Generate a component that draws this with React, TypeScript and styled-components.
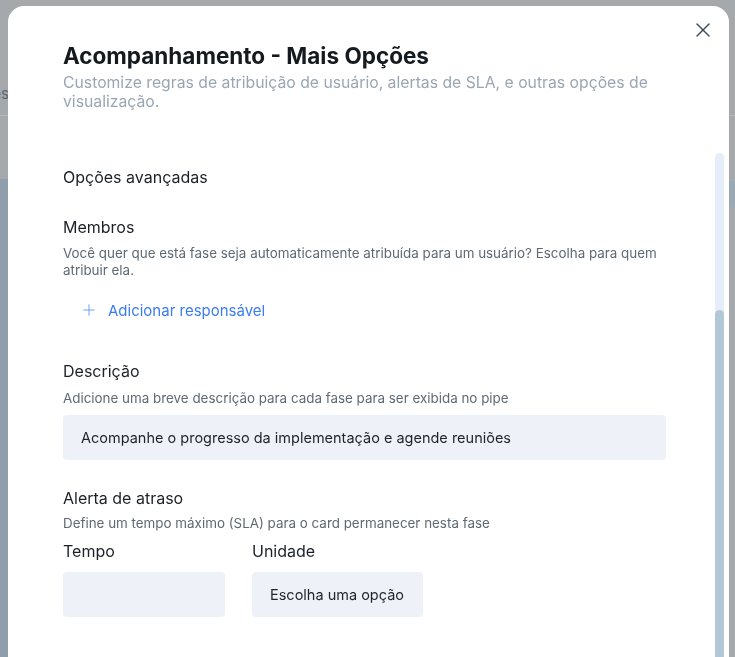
import React, { useLayoutEffect, useRef } from "react";
import styled, { createGlobalStyle } from "styled-components";
import { X, Plus } from "lucide-react";

const GlobalStyle = createGlobalStyle`
  html, body {
    margin: 0;
    height: 100%;
    overflow: hidden;
  }
  body {
    font-family: Inter, "Noto Sans", sans-serif;
    background-color: #a6a9ab;
  }
`;

const Page = styled.div`
  height: 100vh;
  display: flex;
  flex-direction: column;
`;

const TopBar = styled.header`
  height: 116px;
  border-bottom: 1px solid #b5b9bc;
  display: flex;
  align-items: flex-end;
  padding-bottom: 12px;
  box-sizing: border-box;
`;

const TabLabel = styled.div`
  width: 9px;
  display: flex;
  justify-content: flex-end;
  white-space: nowrap;
  font-size: 15px;
  color: #586674;
`;

const Board = styled.div`
  flex: 1;
  display: flex;
  justify-content: space-between;
  padding-top: 63px;
`;

const Column = styled.div`
  width: 12px;
  background-color: #8f9eaa;
`;

const SideCard = styled.div`
  width: 8px;
  height: 26px;
  margin-top: 2px;
  background-color: #9aa8b3;
`;

const Overlay = styled.div`
  position: fixed;
  inset: 0;
`;

const Modal = styled.section`
  position: absolute;
  top: 6px;
  left: 8px;
  right: 6px;
  bottom: -16px;
  background-color: #ffffff;
  border-radius: 16px;
  display: flex;
  flex-direction: column;
  overflow: hidden;
`;

const CloseButton = styled.button`
  position: absolute;
  top: 12px;
  right: 14px;
  width: 24px;
  height: 24px;
  padding: 0;
  border: none;
  background: transparent;
  color: #3d4a56;
  display: flex;
  align-items: center;
  justify-content: center;
  cursor: pointer;
`;

const Header = styled.div`
  padding: 36px 60px 0 55px;
  height: 147px;
  box-sizing: border-box;
  flex-shrink: 0;
`;

const Title = styled.h1`
  margin: 0;
  font-size: 22.5px;
  line-height: 28.6px;
  font-weight: 700;
  color: #151a1f;
`;

const Subtitle = styled.p`
  margin: 2px 0 0;
  font-size: 15.75px;
  line-height: 19.2px;
  color: #9aa6b3;
`;

const BodyWrap = styled.div`
  flex: 1;
  min-height: 0;
  display: flex;
  margin: 0 5px 16px 0;
`;

const Body = styled.div`
  flex: 1;
  min-width: 0;
  padding: 0 49px 0 55px;
  overflow-y: scroll;
  scrollbar-width: none;

  &::-webkit-scrollbar {
    display: none;
  }
`;

const ScrollTrack = styled.div`
  width: 9px;
  flex-shrink: 0;
  background-color: #e5eef8;
  border-radius: 5px 5px 0 0;
  display: flex;
  flex-direction: column;
`;

const ScrollThumb = styled.div`
  margin-top: 157px;
  flex: 1;
  background-color: #b3c8d7;
  border-radius: 5px 5px 0 0;
`;

const Section = styled.div<{ $gap?: number }>`
  margin-top: ${(p) => p.$gap ?? 0}px;
`;

const SectionTitle = styled.h3<{ $gap?: number }>`
  margin: ${(p) => p.$gap ?? 0}px 0 0;
  font-size: 16px;
  line-height: 24px;
  font-weight: 400;
  color: #1c2127;
`;

const Help = styled.p<{ $gap?: number }>`
  margin: ${(p) => p.$gap ?? 5}px 0 0;
  font-size: 13.4px;
  line-height: 17px;
  color: #5e6974;
`;

const AddButton = styled.button`
  margin-top: 13px;
  height: 36px;
  padding: 0 0 0 17px;
  border: none;
  background: transparent;
  display: flex;
  align-items: center;
  gap: 10px;
  font-family: inherit;
  font-size: 15px;
  color: #3b7cf4;
  cursor: pointer;

  svg {
    color: #6b9cf4;
  }
`;

const Field = styled.div<{ $width?: number; $gap?: number }>`
  margin-top: ${(p) => p.$gap ?? 9}px;
  width: ${(p) => (p.$width ? `${p.$width}px` : "100%")};
  height: 45px;
  box-sizing: border-box;
  padding: 0 18px;
  background-color: #eef1f8;
  border-radius: 4px;
  display: flex;
  align-items: center;
  font-size: 14.5px;
  color: #1f2429;
  white-space: nowrap;
`;

const Row = styled.div`
  display: flex;
  gap: 27px;
  margin-top: 7px;
`;

const FieldGroup = styled.div``;

const Hidden = styled.div`
  height: 240px;
  box-sizing: border-box;
  padding-top: 24px;
`;

const BottomSpace = styled.div`
  height: 40px;
`;

export default function App() {
  const bodyRef = useRef<HTMLDivElement>(null);

  useLayoutEffect(() => {
    if (bodyRef.current) {
      bodyRef.current.scrollTop = bodyRef.current.scrollHeight;
    }
  }, []);

  return (
    <>
      <GlobalStyle />
      <Page>
        <TopBar>
          <TabLabel>Fases</TabLabel>
        </TopBar>
        <Board>
          <Column />
          <SideCard />
        </Board>
      </Page>
      <Overlay>
        <Modal>
          <CloseButton aria-label="Fechar">
            <X size={24} strokeWidth={1.4} />
          </CloseButton>
          <Header>
            <Title>Acompanhamento - Mais Opções</Title>
            <Subtitle>
              Customize regras de atribuição de usuário, alertas de SLA, e outras
              opções de visualização.
            </Subtitle>
          </Header>
          <BodyWrap>
            <Body ref={bodyRef}>
              <Hidden>
                <SectionTitle>Nome da fase</SectionTitle>
                <Field>Acompanhamento</Field>
                <SectionTitle $gap={25}>Cor</SectionTitle>
                <Help>Escolha uma cor para identificar a fase</Help>
              </Hidden>
              <SectionTitle>Opções avançadas</SectionTitle>
              <Section $gap={26}>
                <SectionTitle>Membros</SectionTitle>
                <Help $gap={6}>
                  Você quer que está fase seja automaticamente atribuída para um
                  usuário? Escolha para quem atribuir ela.
                </Help>
                <AddButton>
                  <Plus size={18} strokeWidth={1.3} />
                  Adicionar responsável
                </AddButton>
              </Section>
              <Section $gap={31}>
                <SectionTitle>Descrição</SectionTitle>
                <Help $gap={7}>
                  Adicione uma breve descrição para cada fase para ser exibida no pipe
                </Help>
                <Field $gap={8}>
                  Acompanhe o progresso da implementação e agende reuniões
                </Field>
              </Section>
              <Section $gap={26}>
                <SectionTitle>Alerta de atraso</SectionTitle>
                <Help>Define um tempo máximo (SLA) para o card permanecer nesta fase</Help>
                <Row>
                  <FieldGroup>
                    <SectionTitle>Tempo</SectionTitle>
                    <Field $width={162} />
                  </FieldGroup>
                  <FieldGroup>
                    <SectionTitle>Unidade</SectionTitle>
                    <Field $width={171}>Escolha uma opção</Field>
                  </FieldGroup>
                </Row>
              </Section>
              <BottomSpace />
            </Body>
            <ScrollTrack>
              <ScrollThumb />
            </ScrollTrack>
          </BodyWrap>
        </Modal>
      </Overlay>
    </>
  );
}
